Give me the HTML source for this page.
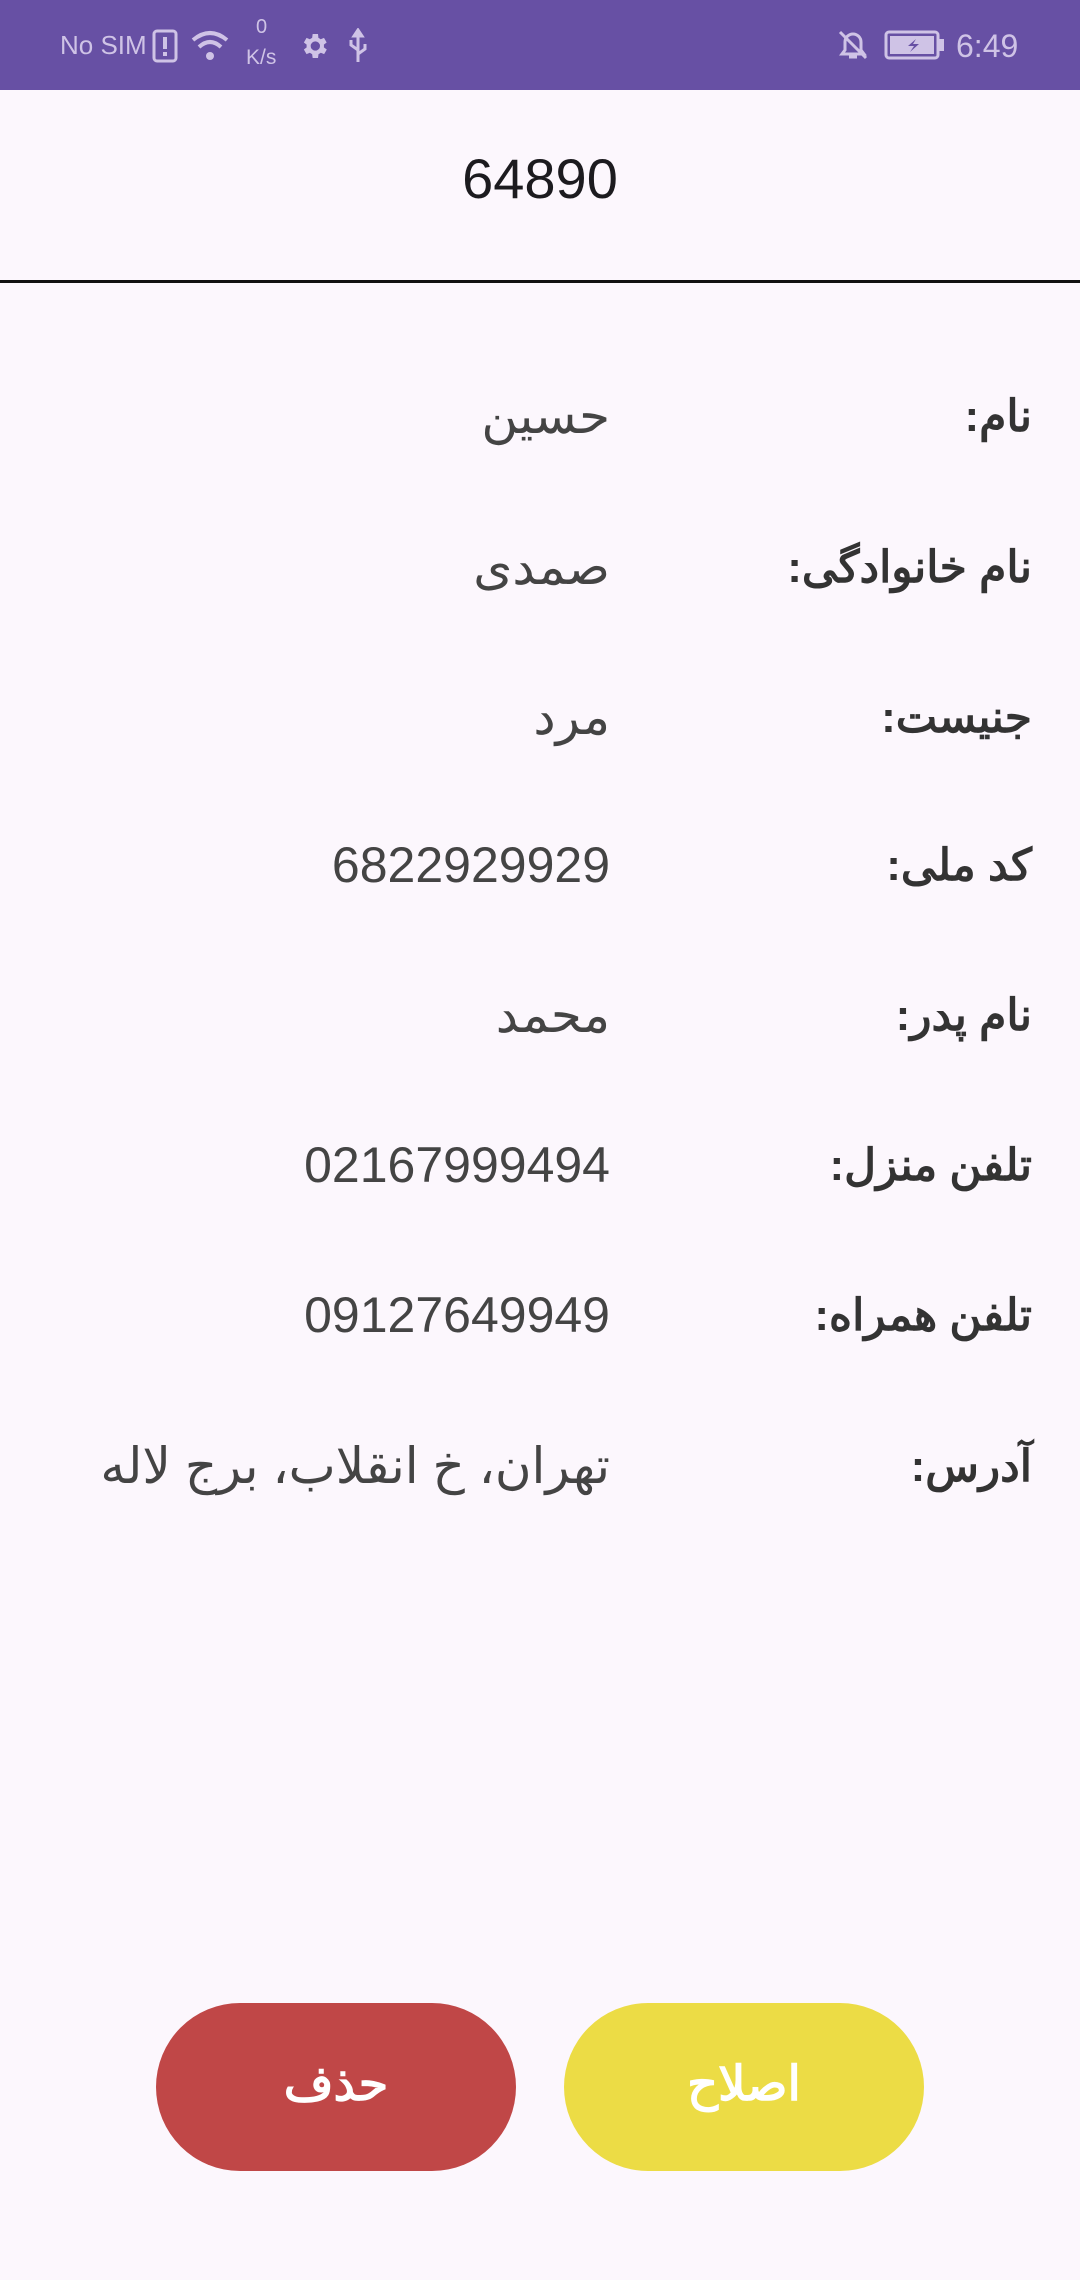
<!DOCTYPE html>
<html><head><meta charset="utf-8"><style>
body{margin:0;width:1080px;height:2280px;background:#fcf7fd;font-family:"Liberation Sans","Noto Sans CJK SC",sans-serif;position:relative;overflow:hidden}
.sb{position:absolute;left:0;top:0;width:1080px;height:90px;background:#6750a4;color:#cfc3e6;font-size:26px}
.title{position:absolute;top:146px;width:1080px;text-align:center;font-size:56px;color:#1c1b1f}
.line{position:absolute;top:280px;left:0;width:1080px;height:3px;background:#111}
.lab{position:absolute;right:48px;font-size:44px;font-weight:bold;color:#333;direction:rtl;white-space:nowrap}
.val{position:absolute;right:470px;font-size:50px;color:#444;direction:rtl;white-space:nowrap}
.btn{position:absolute;top:2003px;height:168px;width:360px;border-radius:84px;color:#fff;font-size:48px;font-weight:bold;text-align:center;line-height:164px;direction:rtl}
</style></head><body>
<div class="sb">
<span style="position:absolute;left:60px;top:30px">No SIM</span>
<svg style="position:absolute;left:152px;top:29px" width="28" height="34"><rect x="2" y="2" width="22" height="30" rx="3" fill="none" stroke="#cfc3e6" stroke-width="3"/><rect x="11" y="8" width="4" height="12" fill="#cfc3e6"/><rect x="11" y="23" width="4" height="4" fill="#cfc3e6"/></svg>
<svg style="position:absolute;left:190px;top:28px" width="40" height="34"><path d="M3 12 Q20 -2 37 12" fill="none" stroke="#cfc3e6" stroke-width="4"/><path d="M9 19 Q20 9 31 19" fill="none" stroke="#cfc3e6" stroke-width="4"/><circle cx="20" cy="28" r="4" fill="#cfc3e6"/></svg>
<span style="position:absolute;left:256px;top:16px;font-size:20px">0</span>
<span style="position:absolute;left:246px;top:46px;font-size:21px">K/s</span>
<svg style="position:absolute;left:298px;top:30px" width="32" height="32" viewBox="0 0 24 24"><path fill="#cfc3e6" d="M19.4 13a7.5 7.5 0 000-2l2.1-1.6-2-3.5-2.5 1a7 7 0 00-1.7-1L15 3h-4l-.4 2.9a7 7 0 00-1.7 1l-2.5-1-2 3.5L6.5 11a7.5 7.5 0 000 2l-2.1 1.6 2 3.5 2.5-1a7 7 0 001.7 1L11 21h4l.4-2.9a7 7 0 001.7-1l2.5 1 2-3.5zM13 15.5a3.5 3.5 0 110-7 3.5 3.5 0 010 7z"/></svg>
<svg style="position:absolute;left:346px;top:28px" width="24" height="36"><path d="M12 2v32M12 2l-4 6h8zM12 22l-7-5v-5M12 26l7-5v-5" fill="none" stroke="#cfc3e6" stroke-width="3"/></svg>
<svg style="position:absolute;left:836px;top:28px" width="34" height="34"><path d="M6 26h22l-3-4v-8a8 8 0 00-16 0v8zM13 29h8M4 4l26 26" fill="none" stroke="#cfc3e6" stroke-width="3"/></svg>
<svg style="position:absolute;left:884px;top:30px" width="62" height="30"><rect x="2" y="2" width="52" height="26" rx="3" fill="none" stroke="#cfc3e6" stroke-width="3"/><rect x="6" y="6" width="44" height="18" fill="#cfc3e6"/><rect x="55" y="9" width="5" height="12" fill="#cfc3e6"/><path d="M32 9l-8 7h6l-4 6 9-8h-6z" fill="#6750a4"/></svg>
<span style="position:absolute;left:956px;top:28px;font-size:32px">6:49</span>
</div>
<div class="title">64890</div>
<div class="line"></div>
<div class="lab" style="top:391px">نام:</div><div class="val" style="top:387px">حسین</div>
<div class="lab" style="top:542px">نام خانوادگی:</div><div class="val" style="top:538px">صمدی</div>
<div class="lab" style="top:692px">جنیست:</div><div class="val" style="top:688px">مرد</div>
<div class="lab" style="top:840px">کد ملی:</div><div class="val" style="top:836px">6822929929</div>
<div class="lab" style="top:990px">نام پدر:</div><div class="val" style="top:986px">محمد</div>
<div class="lab" style="top:1140px">تلفن منزل:</div><div class="val" style="top:1136px">02167999494</div>
<div class="lab" style="top:1290px">تلفن همراه:</div><div class="val" style="top:1286px">09127649949</div>
<div class="lab" style="top:1441px">آدرس:</div><div class="val" style="top:1437px">تهران، خ انقلاب، برج لاله</div>
<div class="btn" style="left:156px;background:#c04747">حذف</div>
<div class="btn" style="left:564px;background:#ecdc45">اصلاح</div>
</body></html>
